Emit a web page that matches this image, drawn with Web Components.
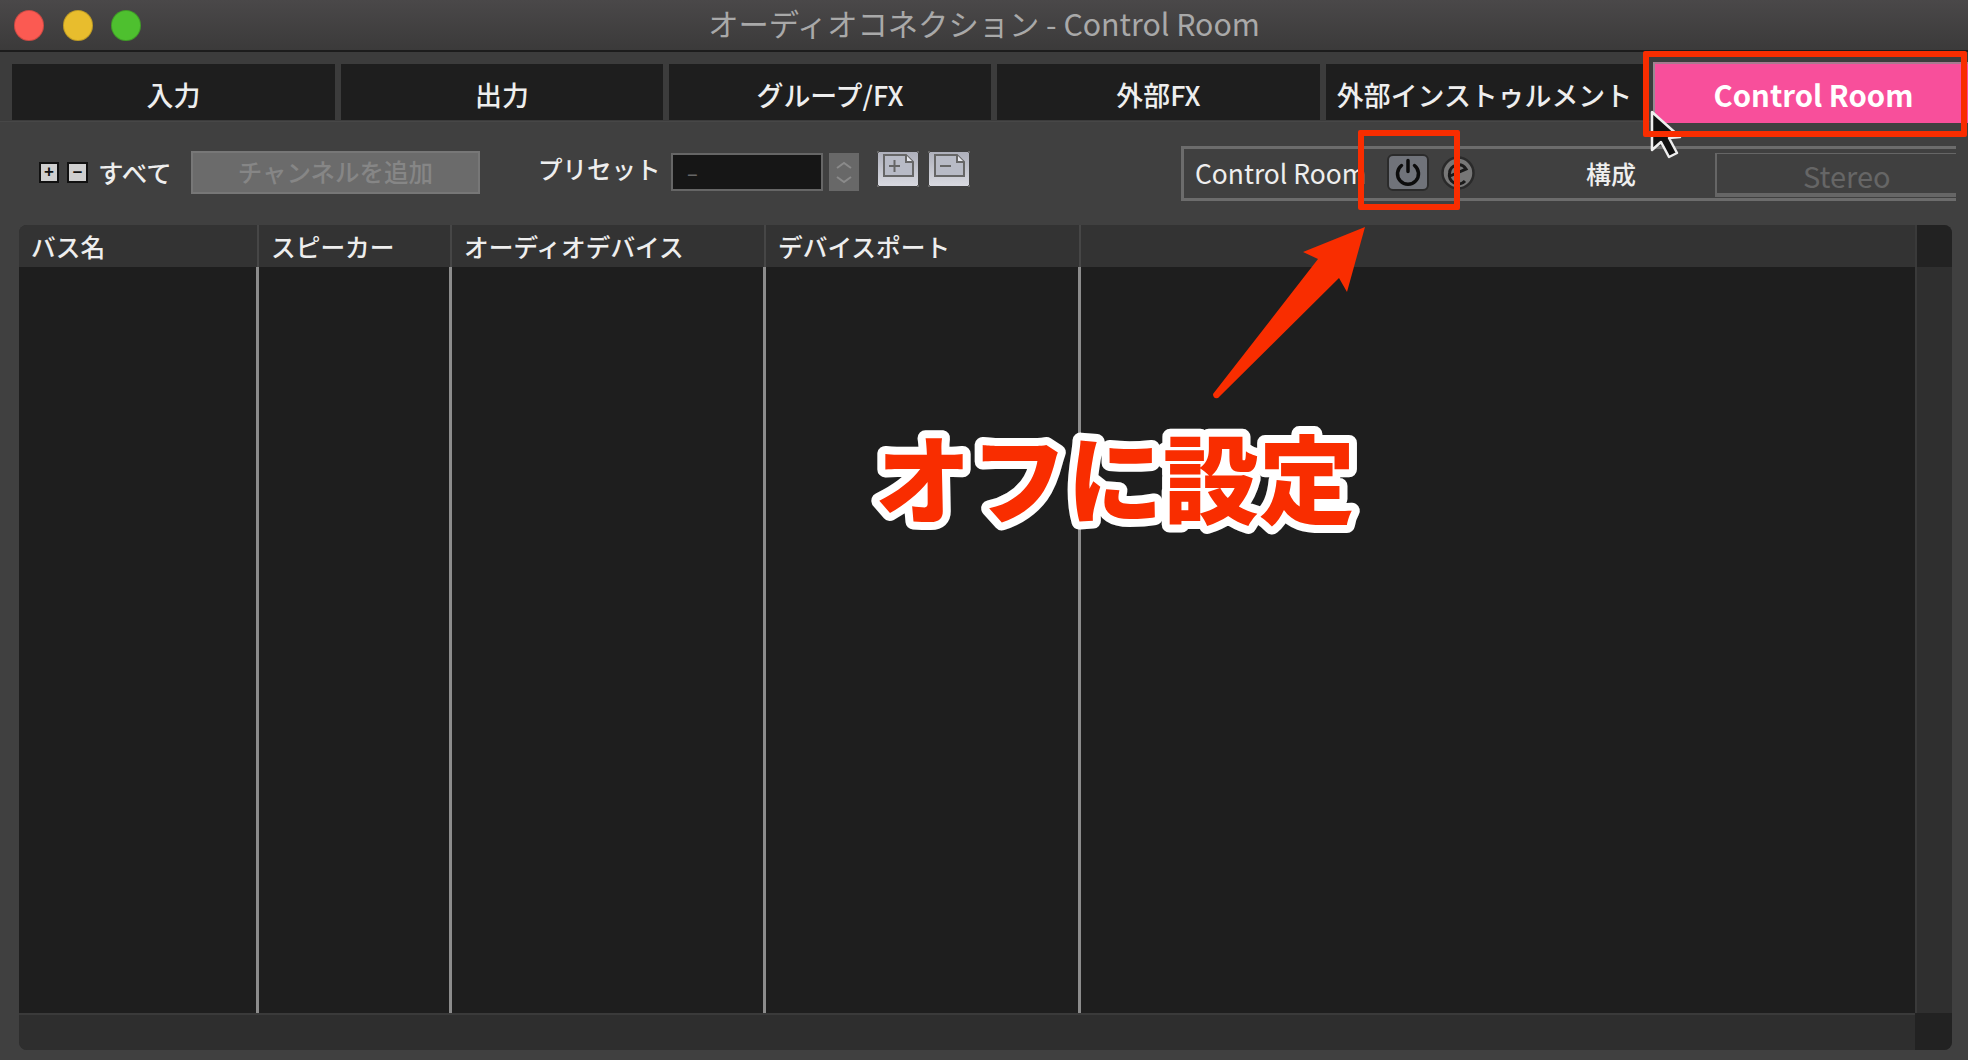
<!DOCTYPE html>
<html lang="ja">
<head>
<meta charset="utf-8">
<title>オーディオコネクション - Control Room</title>
<style>
  html, body { margin: 0; height: 100%; background: #404040; overflow: hidden; }
  body { font-family: "Noto Sans CJK JP", sans-serif; color: #eee; }
</style>
</head>
<body>
<app-window>
  <title-bar>オーディオコネクション - Control Room</title-bar>
  <tab-bar>
    <tab-item>入力</tab-item>
    <tab-item>出力</tab-item>
    <tab-item>グループ/FX</tab-item>
    <tab-item>外部FX</tab-item>
    <tab-item>外部インストゥルメント</tab-item>
    <tab-item active>Control Room</tab-item>
  </tab-bar>
  <tool-bar></tool-bar>
  <bus-table></bus-table>
  <call-outs></call-outs>
</app-window>

<script>
const JP = `"Noto Sans CJK JP", sans-serif`;

class AppWindow extends HTMLElement {
  connectedCallback() {
    this.attachShadow({ mode: 'open' });
    this.shadowRoot.innerHTML = `
      <style>
        :host { display: flex; flex-direction: column; position: relative; width: 1968px; height: 1060px; overflow: hidden; background: #404040; font-feature-settings: "palt"; }
      </style>
      <slot></slot>
    `;
  }
}
customElements.define('app-window', AppWindow);

class TitleBar extends HTMLElement {
  connectedCallback() {
    this.attachShadow({ mode: 'open' });
    this.shadowRoot.innerHTML = `
      <style>
        :host { display: flex; flex: none; align-items: center; height: 50px; border-bottom: 2px solid #1c1c1c; background: linear-gradient(#4a4849, #3b3a3a); position: relative; }
        .lights { display: flex; gap: 18.500px; padding-left: 14px; }
        .lights i { display: block; width: 30px; height: 31px; border-radius: 50%; box-sizing: border-box; border: 1px solid rgba(0,0,0,.18); }
        .r { background: #fb5a52; }
        .y { background: #e8bd2d; }
        .g { background: #4ec02f; }
        .t { position: absolute; left: 0; right: 0; top: 0; bottom: 4px; display: flex; align-items: center; justify-content: center; font: 30.300px ${JP}; color: #a9a9a9; }
      </style>
      <div class="lights"><i class="r"></i><i class="y"></i><i class="g"></i></div>
      <div class="t"><slot></slot></div>
    `;
  }
}
customElements.define('title-bar', TitleBar);

class TabBar extends HTMLElement {
  connectedCallback() {
    this.attachShadow({ mode: 'open' });
    this.shadowRoot.innerHTML = `
      <style>
        :host { display: flex; flex: none; gap: 6px; height: 70px; box-sizing: border-box; padding: 12px 0 14px 12px; background: #3c3c3c; border-bottom: 1px solid #474747; }
      </style>
      <slot></slot>
    `;
  }
}
customElements.define('tab-bar', TabBar);

class TabItem extends HTMLElement {
  connectedCallback() {
    this.attachShadow({ mode: 'open' });
    this.shadowRoot.innerHTML = `
      <style>
        :host { display: flex; align-items: center; justify-content: center; width: 317px; height: 56px; box-sizing: border-box; padding-top: 4px; background: #1e1e1e; font: 500 26.900px ${JP}; color: #eee; flex: none; }
        :host(:nth-of-type(-n+4)) { width: 323px; }
        :host(:nth-of-type(3)), :host(:nth-of-type(2)) { width: 322px; }
        :host([active]) { width: 315px; height: 61px; margin: -2px 0 -3px 4px; padding: 0 0 0 4px; background: #f84f9b; border-top: 2px solid #a87a90; border-left: 2px solid #9a8a92; color: #fff; font-weight: 700; font-size: 29.300px; }
      </style>
      <slot></slot>
    `;
  }
}
customElements.define('tab-item', TabItem);

class ToolBar extends HTMLElement {
  connectedCallback() {
    this.attachShadow({ mode: 'open' });
    this.shadowRoot.innerHTML = `
      <style>
        :host { display: flex; flex: none; align-items: flex-start; height: 103px; box-sizing: border-box; padding-left: 39px; font: 500 24.500px ${JP}; color: #eee; }
        .pm { width: 20px; height: 21px; margin-top: 40px; box-sizing: border-box; border: 2px solid #111; background: #cfcfcf; color: #111; font: 700 17px/15px "Liberation Sans", sans-serif; text-align: center; }
        .pm + .pm { margin-left: 8px; width: 21px; }
        .all { margin: 34px 0 0 10px; width: 93px; line-height: 32px; font-size: 25.500px; }
        .add { width: 289px; height: 43px; margin-top: 29px; box-sizing: border-box; border: 2px solid #777; background: #6b6b6b; color: #868686; display: flex; align-items: center; justify-content: center; padding-bottom: 2px; }
        .preset { margin: 30px 0 0 58px; width: 133px; line-height: 34px; }
        .field { width: 152px; height: 38px; margin-top: 31px; box-sizing: border-box; border: 2px solid #666; background: #161616; color: #666; padding-left: 14px; line-height: 36px; font-size: 20px; }
        .step { width: 30px; height: 38px; margin: 31px 18px 0 6px; background: #686868; }
        .step svg, .doc svg { display: block; }
        .doc { margin-top: 29px; }
        .doc + .doc { margin-left: 9px; }
        .group { flex: none; width: 775px; height: 55px; margin: 24px 0 0 211px; box-sizing: border-box; border: solid #6c6c6c; border-width: 3px 0 3px 3px; display: flex; align-items: flex-start; }
        .name { width: 203px; padding-left: 11px; box-sizing: border-box; margin-top: 8px; line-height: 32px; font-size: 26.400px; white-space: nowrap; font-weight: 400; }
        .power { width: 42px; height: 37px; margin-top: 5px; box-sizing: border-box; border: 2px solid #2b2b2b; border-radius: 6px; background: #70737a; }
        .power svg, .ext svg { display: block; }
        .ext { margin: 6px 0 0 12px; }
        .cfg { width: 50px; margin: 8px 0 0 111px; line-height: 32px; white-space: nowrap; font-size: 25px; }
        .sel { flex: 1; height: 44px; margin: 4px 0 0 79px; box-sizing: border-box; border: solid #666; border-width: 1px 0 4px 2px; color: #666; display: flex; align-items: center; padding: 3px 0 0 86px; font-size: 29px; font-weight: 400; }
      </style>
      <div class="pm">+</div>
      <div class="pm">–</div>
      <div class="all">すべて</div>
      <div class="add">チャンネルを追加</div>
      <div class="preset">プリセット</div>
      <div class="field">–</div>
      <div class="step">
        <svg width="30" height="38" fill="none" stroke="#8a8a8a" stroke-width="2"><path d="M8 15l7-5 7 5M8 24l7 5 7-5"/></svg>
      </div>
      <div class="doc">
        <svg width="42" height="36">
          <defs><linearGradient id="d" x2="0" y2="1"><stop offset="0" stop-color="#aeb0bb"/><stop offset="1" stop-color="#d8d9e0"/></linearGradient></defs>
          <rect x="1" y="1" width="40" height="34" fill="url(#d)"/>
          <path d="M7 4h22l7 7v14H7z" fill="#b8bbc6" stroke="#666" stroke-width="2"/>
          <path d="M29 4v7h7" fill="#e6e7ee" stroke="#666" stroke-width="2"/>
          <path d="M12 15h11M17.500 9v12" stroke="#666" stroke-width="2"/>
          <path d="M0 1h2M40 1h2M0 35h2M40 35h2" stroke="#666" stroke-width="2"/>
        </svg>
      </div>
      <div class="doc">
        <svg width="42" height="36">
          <rect x="1" y="1" width="40" height="34" fill="url(#d)"/>
          <path d="M7 4h22l7 7v14H7z" fill="#b8bbc6" stroke="#666" stroke-width="2"/>
          <path d="M29 4v7h7" fill="#e6e7ee" stroke="#666" stroke-width="2"/>
          <path d="M12 15h11" stroke="#666" stroke-width="2"/>
          <path d="M0 1h2M40 1h2M0 35h2M40 35h2" stroke="#666" stroke-width="2"/>
        </svg>
      </div>
      <div class="group">
        <div class="name">Control Room</div>
        <div class="power">
          <svg width="38" height="33" fill="none" stroke="#0c0c0c" stroke-width="3.500" stroke-linecap="round"><path d="M12.500 9.500a10.500 10.500 0 1 0 13 0M19 4.500v11"/></svg>
        </div>
        <div class="ext">
          <svg width="34" height="36" fill="none"><circle cx="17" cy="18" r="15.500" fill="#777" stroke="#2a2a2a" stroke-width="2.500"/><path d="M9 21l16-7a9 9 0 0 0-16.500 4a9 9 0 0 0 15.500 8" stroke="#1a1a1a" stroke-width="3"/></svg>
        </div>
        <div class="cfg">構成</div>
        <div class="sel">Stereo</div>
      </div>
    `;
  }
}
customElements.define('tool-bar', ToolBar);

class BusTable extends HTMLElement {
  connectedCallback() {
    this.attachShadow({ mode: 'open' });
    this.shadowRoot.innerHTML = `
      <style>
        :host { display: grid; flex: 1; min-height: 0; margin: 0 16px 10px 19px; grid-template-columns: 240px 193px 314px 315px 1fr 37px; grid-template-rows: 42px 1fr 37px; background: #2e2e2e; border-radius: 8px; overflow: hidden; font: 500 24.700px ${JP}; color: #eee; }
        .h { background: #333; display: flex; align-items: center; padding-left: 12px; border-right: 2px solid #464646; box-sizing: border-box; white-space: nowrap; }
        .h.c { background: #222; padding: 0; border: 0; border-left: 2px solid #3a3a3a; }
        .b { background: #1e1e1e; border-right: 3px solid #8c8c8c; box-sizing: border-box; }
        .b.last { border-right: 0; }
        .vs { background: #2f2f2f; border-left: 2px solid #3a3a3a; }
        .hs { grid-column: 1 / 6; background: #2e2e2e; border-top: 2px solid #3a3a3a; }
        .corner { background: #222; }
      </style>
      <div class="h">バス名</div><div class="h">スピーカー</div><div class="h">オーディオデバイス</div><div class="h">デバイスポート</div><div class="h" style="border-right:0"></div><div class="h c"></div>
      <div class="b"></div><div class="b"></div><div class="b"></div><div class="b"></div><div class="b last"></div><div class="vs"></div>
      <div class="hs"></div><div class="corner"></div>
    `;
  }
}
customElements.define('bus-table', BusTable);

class CallOuts extends HTMLElement {
  connectedCallback() {
    this.attachShadow({ mode: 'open' });
    this.shadowRoot.innerHTML = `
      <style>
        :host { position: absolute; inset: 0; pointer-events: none; }
        .box { position: absolute; box-sizing: border-box; border: 6px solid #f92d00; border-radius: 2px; }
        svg { position: absolute; left: 0; top: 0; }
        text { font: 900 96px "Noto Sans CJK JP", sans-serif; fill: #f92d00; stroke: #fff; stroke-width: 16px; stroke-linejoin: round; paint-order: stroke fill; }
      </style>
      <svg width="1968" height="1060">
        <path d="M1652 112V150L1661 142L1669 157L1677 153L1669 138L1680 137Z" fill="#111" stroke="#eee" stroke-width="2.500" stroke-linejoin="round"/>
        <path d="M1365 227L1303 252L1318 259L1213 394Q1213 399 1218 398L1339 278L1347 292Z" fill="#f92d00"/>
        <text x="875" y="516">オフに設定</text>
      </svg>
      <div class="box" style="left:1643px;top:51px;width:324px;height:86px"></div>
      <div class="box" style="left:1358px;top:130px;width:102px;height:80px"></div>
    `;
  }
}
customElements.define('call-outs', CallOuts);
</script>
</body>
</html>
